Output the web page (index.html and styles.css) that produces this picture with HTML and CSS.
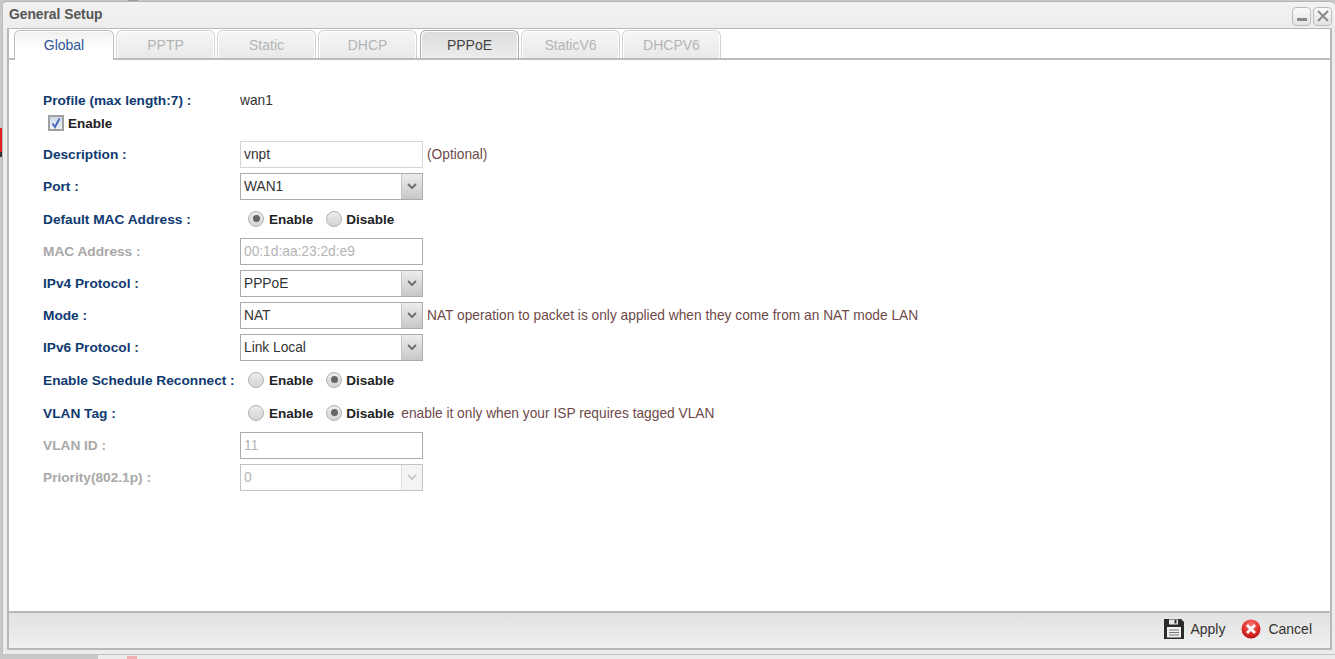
FILE: index.html
```html
<!DOCTYPE html>
<html lang="en">
<head>
<meta charset="utf-8">
<title>General Setup</title>
<link rel="stylesheet" href="styles.css">
</head>
<body>
<div class="backdrop">
  <span class="bg-mark bg-red"></span>
  <span class="bg-mark bg-dark"></span>
  <span class="bg-top"></span>
  <span class="bg-foot"><i class="foot-pink"></i></span>
</div>
<div class="window">
  <header class="titlebar">
    <span class="title">General Setup</span>
    <div class="winbtns">
      <button class="winbtn" aria-label="Minimize"><svg width="14" height="14" viewBox="0 0 14 14"><rect x="2" y="9" width="10" height="3" fill="#8a8a8a"/></svg></button>
      <button class="winbtn" aria-label="Close"><svg width="14" height="14" viewBox="0 0 14 14"><path d="M2 2L12 12M12 2L2 12" stroke="#8a8a8a" stroke-width="2" fill="none"/></svg></button>
    </div>
  </header>
  <div class="panel">
    <nav class="tabs">
      <span class="tab active">Global</span>
      <span class="tab">PPTP</span>
      <span class="tab">Static</span>
      <span class="tab">DHCP</span>
      <span class="tab enabled">PPPoE</span>
      <span class="tab">StaticV6</span>
      <span class="tab">DHCPV6</span>
    </nav>
    <main class="form">
      <div class="row h23"><label class="lbl">Profile (max length:7) :</label><span class="val">wan1</span></div>
      <div class="row h23 check-row"><span class="check"><svg width="12" height="12" viewBox="0 0 12 12"><path d="M2.5 6.5L5 10L9.5 1.5" stroke="#4a6cc0" stroke-width="2" fill="none"/></svg></span><b class="opt">Enable</b></div>
      <div class="row desc"><label class="lbl">Description :</label><span class="input light">vnpt</span><span class="note">(Optional)</span></div>
      <div class="row"><label class="lbl">Port :</label><span class="select">WAN1<i class="arrow"><svg width="10" height="6" viewBox="0 0 10 6"><path d="M1 1L5 5L9 1" stroke="#707070" stroke-width="2" fill="none"/></svg></i></span></div>
      <div class="row h33"><label class="lbl">Default MAC Address :</label><span class="radios"><span class="radio on"></span><b class="opt">Enable</b><span class="radio"></span><b class="opt">Disable</b></span></div>
      <div class="row off"><label class="lbl">MAC Address :</label><span class="input">00:1d:aa:23:2d:e9</span></div>
      <div class="row"><label class="lbl">IPv4 Protocol :</label><span class="select">PPPoE<i class="arrow"><svg width="10" height="6" viewBox="0 0 10 6"><path d="M1 1L5 5L9 1" stroke="#707070" stroke-width="2" fill="none"/></svg></i></span></div>
      <div class="row"><label class="lbl">Mode :</label><span class="select">NAT<i class="arrow"><svg width="10" height="6" viewBox="0 0 10 6"><path d="M1 1L5 5L9 1" stroke="#707070" stroke-width="2" fill="none"/></svg></i></span><span class="note">NAT operation to packet is only applied when they come from an NAT mode LAN</span></div>
      <div class="row"><label class="lbl">IPv6 Protocol :</label><span class="select">Link Local<i class="arrow"><svg width="10" height="6" viewBox="0 0 10 6"><path d="M1 1L5 5L9 1" stroke="#707070" stroke-width="2" fill="none"/></svg></i></span></div>
      <div class="row h33"><label class="lbl">Enable Schedule Reconnect :</label><span class="radios"><span class="radio"></span><b class="opt">Enable</b><span class="radio on"></span><b class="opt">Disable</b></span></div>
      <div class="row h33"><label class="lbl">VLAN Tag :</label><span class="radios"><span class="radio"></span><b class="opt">Enable</b><span class="radio on"></span><b class="opt">Disable</b></span><span class="note tight">enable it only when your ISP requires tagged VLAN</span></div>
      <div class="row off"><label class="lbl">VLAN ID :</label><span class="input">11</span></div>
      <div class="row off"><label class="lbl">Priority(802.1p) :</label><span class="select dim">0<i class="arrow"><svg width="10" height="6" viewBox="0 0 10 6"><path d="M1 1L5 5L9 1" stroke="#c8c8c8" stroke-width="2" fill="none"/></svg></i></span></div>
    </main>
    <footer class="footer">
      <span class="action save">
        <svg width="20" height="20" viewBox="0 0 20 20"><path d="M0 0H17L20 3V20H0Z" fill="#2b2b2b"/><rect x="5" y="0.5" width="9" height="5" fill="#e8e8e8"/><rect x="10.5" y="1" width="2" height="3.5" fill="#2b2b2b"/><rect x="3" y="8" width="14" height="10.5" fill="#f2f2f2"/><path d="M5 11H15M5 13.5H15M5 16H15" stroke="#777" stroke-width="1"/></svg>
        Apply
      </span>
      <span class="action">
        <svg width="20" height="20" viewBox="0 0 20 20"><defs><radialGradient id="redg" cx="50%" cy="30%" r="70%"><stop offset="0" stop-color="#f47a72"/><stop offset="0.6" stop-color="#e0302c"/><stop offset="1" stop-color="#b81216"/></radialGradient></defs><circle cx="10" cy="10" r="9.5" fill="url(#redg)"/><path d="M6 6L14 14M14 6L6 14" stroke="#fff" stroke-width="2.8" fill="none"/></svg>
        Cancel
      </span>
    </footer>
  </div>
</div>
</body>
</html>
```
FILE: styles.css
```css
* { box-sizing: border-box; }
html, body { margin: 0; height: 100%; overflow: hidden; }
body {
  width: 1335px;
  height: 659px;
  background: #c8c8c8;
  font-family: "Liberation Sans", Arial, sans-serif;
  font-size: 13.75px;
  color: #333;
  padding: 1px 0 4px 2px;
  position: relative;
}
.backdrop { position: absolute; inset: 0; }
.bg-mark { position: absolute; left: 0; width: 2px; }
.bg-red { top: 128px; height: 24px; background: #e02020; }
.bg-dark { top: 152px; height: 5px; background: #333; }
.bg-top { position: absolute; top: 0; left: 128px; width: 10px; height: 1px; background: #999; }
.bg-foot { position: absolute; left: 98px; right: 0; bottom: 0; height: 4px; background: #ececec; }
.foot-pink { position: absolute; left: 29px; top: 1px; width: 10px; height: 3px; background: #eeb0b0; }
.window {
  position: relative;
  height: 654px;
  background: #ededed;
  background-image: linear-gradient(#f2f2f2, #ececec 30px);
  border-left: 1px solid #bdbdbd;
  border-top: 1px solid #b5b5b5;
  border-bottom: 1px solid #c4c4c4;
  border-radius: 5px 5px 0 0;
  padding: 0 3px 4px 4px;
  display: flex;
  flex-direction: column;
}
.titlebar {
  height: 26px;
  flex: none;
  display: flex;
  align-items: center;
  justify-content: space-between;
}
.title { font-size: 13.8px; font-weight: bold; color: #555; padding: 0 0 2px 2px; }
.winbtns { display: flex; gap: 2px; margin: 2px 0 0; }
.winbtn {
  width: 19px; height: 19px;
  padding: 0;
  display: flex; align-items: center; justify-content: center;
  border: 1px solid #bcbcbc;
  border-radius: 4px;
  background: linear-gradient(#fafafa, #e4e4e4);
}
.panel {
  flex: 1;
  display: flex;
  flex-direction: column;
  background: #fff;
  border: 2px solid #b8b8b8;
  border-top-width: 1px;
  min-height: 0;
}
.tabs {
  height: 31px;
  flex: none;
  display: flex;
  gap: 2px;
  padding: 1px 0 0 5px;
  border-bottom: 2px solid #bcbcbc;
  background: #fff;
}
.tab {
  width: 99px;
  height: 28px;
  display: flex;
  align-items: center;
  justify-content: center;
  border: 1px solid #d2d2d2;
  border-bottom: 0;
  border-radius: 6px 6px 0 0;
  background: linear-gradient(#f6f6f6, #e9e9e9);
  box-shadow: inset 1px 1px 0 #fff, inset -1px 0 0 #fff;
  color: #b4b4b4;
  font-size: 14px;
  padding-top: 1px;
}
.tab.active {
  width: 100px;
  height: 30px;
  border-color: #bcbcbc;
  background: linear-gradient(#f0f0f0, #fff 60%);
  color: #2f5597;
  position: relative;
  z-index: 1;
  padding-bottom: 2px;
}
.tab.enabled {
  margin-left: 1px;
  border-color: #aaa;
  background: linear-gradient(#dcdcdc, #ececec);
  color: #444;
}
.form {
  flex: 1;
  padding: 28px 0 0 34px;
}
.row {
  height: 32px;
  display: flex;
  align-items: center;
}
.h23 { height: 23px; }
.h33 { height: 33px; }
.desc { height: 36px; padding-top: 5px; }
.lbl {
  width: 197px;
  flex: none;
  font-weight: bold;
  font-size: 13.7px;
  color: #0f3a70;
  white-space: nowrap;
}
.h23 .lbl, .h23 .val, .h23 .opt,
.h33 .lbl, .h33 .opt, .h33 .note { padding-top: 2px; }
.val { color: #333; }
.check-row { padding-left: 5px; }
.check {
  width: 16px; height: 16px;
  display: flex; align-items: center; justify-content: center;
  border: 2px solid #a0a0a0;
  background: linear-gradient(#d4daea, #eef0f6);
  margin-right: 4px;
}
.opt { color: #222; font-size: 13.5px; }
.input, .select {
  width: 183px;
  height: 27px;
  flex: none;
  display: flex;
  align-items: center;
  padding-left: 3px;
  border: 1px solid #ababab;
  background: #fff;
  color: #333;
  font-size: 13.75px;
}
.input.light { border-color: #d6d6d6; }
.off .lbl { color: #a8a8a8; }
.off .input, .off .select { color: #b4b4b4; }
.select { position: relative; }
.arrow {
  position: absolute;
  top: 0; right: 0; bottom: 0;
  width: 21px;
  display: flex; align-items: center; justify-content: center;
  border-left: 1px solid #c4c4c4;
  background: linear-gradient(#ececec, #c8c8c8);
}
.select.dim { border-color: #c4c4c4; }
.select.dim .arrow { background: #f4f4f4; border-left-color: #dcdcdc; }
.note { margin-left: 4px; color: #6e4a4a; font-size: 13.75px; white-space: nowrap; }
.note.tight { margin-left: 7px; }
.radios { display: flex; align-items: center; padding-left: 8px; }
.radio {
  width: 16px; height: 16px;
  border-radius: 50%;
  border: 1px solid #b0b0b0;
  background: linear-gradient(#ececec, #d4d4d4);
  margin-right: 5px;
  position: relative;
  flex: none;
}
.radio.on::after {
  content: "";
  position: absolute;
  left: 3.5px; top: 3.5px;
  width: 7px; height: 7px;
  border-radius: 50%;
  background: #666;
}
.opt + .radio { margin-left: 13px; margin-right: 4px; }
.footer {
  height: 37px;
  flex: none;
  border-top: 2px solid #b8b8b8;
  background: linear-gradient(#e2e2e2, #f0f0f0);
  display: flex;
  align-items: center;
  justify-content: flex-end;
  gap: 16px;
  padding: 0 18px 3px 0;
  color: #333;
  font-size: 14px;
}
.action { display: flex; align-items: center; gap: 7px; }
.action.save { gap: 6px; }
```
